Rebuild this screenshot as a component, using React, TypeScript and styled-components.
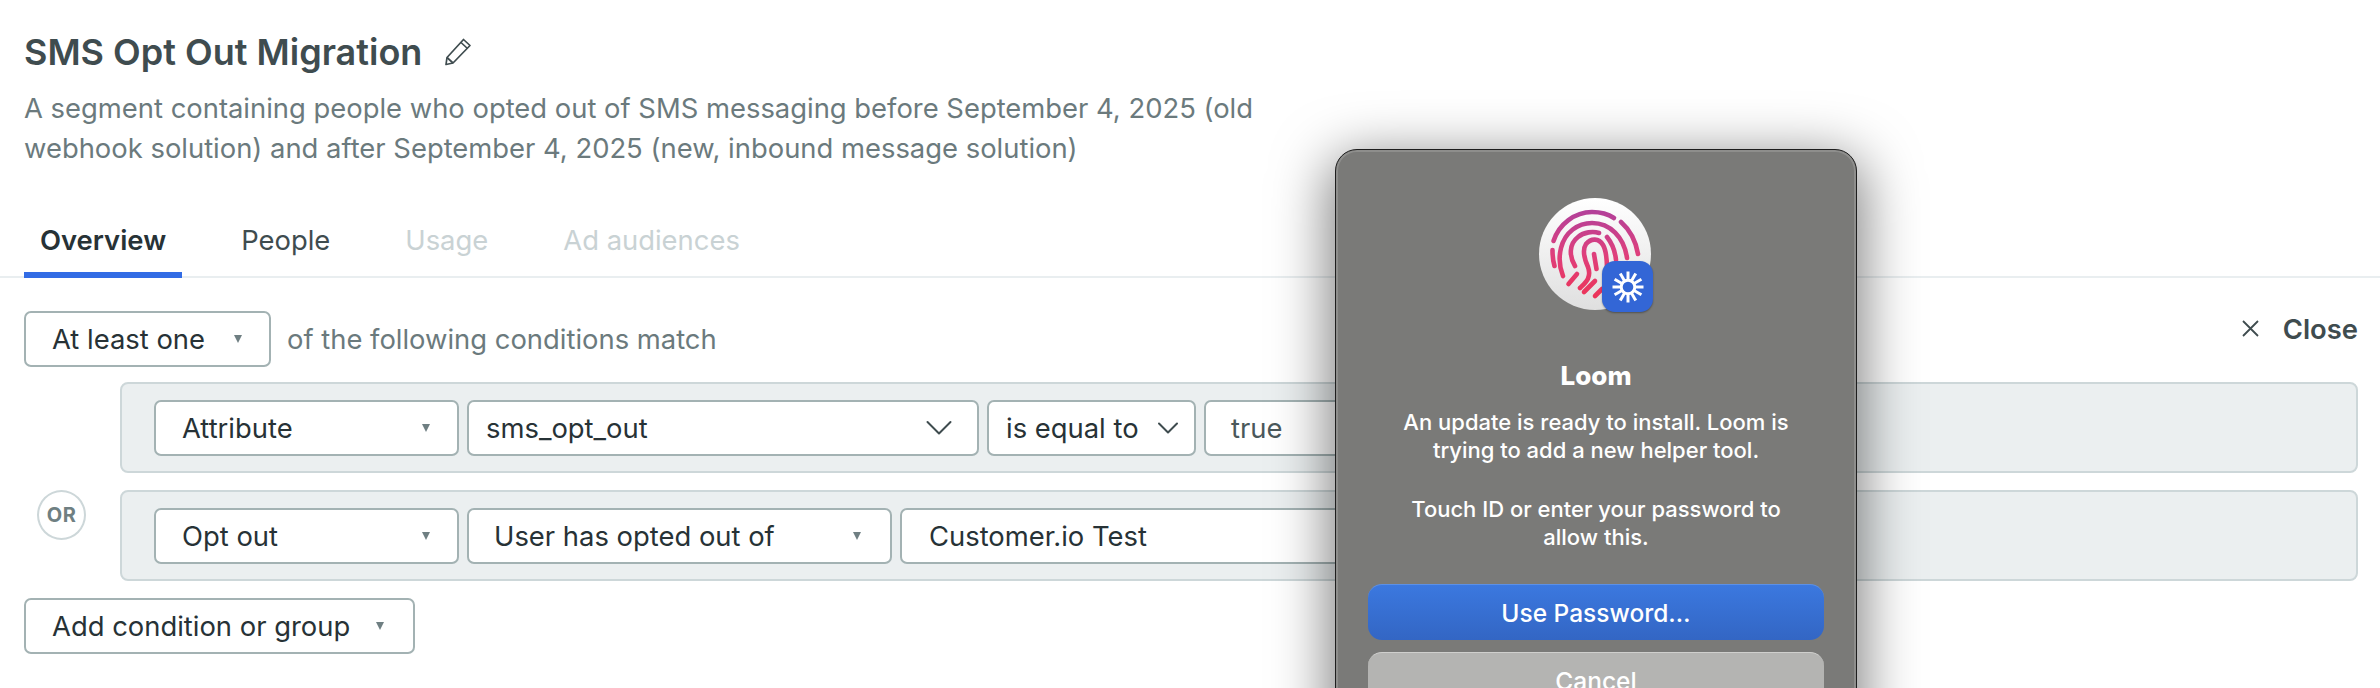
import React from "react";
import styled, { createGlobalStyle } from "styled-components";

const Global = createGlobalStyle`
  html, body { margin: 0; padding: 0; background: #fff; }
  body { width: 2380px; height: 688px; overflow: hidden; font-family: Inter, "Liberation Sans", sans-serif; }
  * { box-sizing: border-box; }
`;

const Page = styled.div`
  position: relative;
  width: 2380px;
  height: 688px;
  overflow: hidden;
  background: #fff;
`;
const Header = styled.header`
  padding: 30px 24px 0;
`;
const TitleRow = styled.div`
  display: flex;
  align-items: center;
  gap: 22px;
  height: 44px;
`;
const Title = styled.h1`
  margin: 0;
  font-size: 36px;
  line-height: 44px;
  font-weight: 600;
  color: #3f4c4f;
`;
const Description = styled.p`
  margin: 14px 0 0;
  width: 1260px;
  font-size: 27.4px;
  line-height: 40px;
  color: #6b7a7d;
`;
const Tabs = styled.nav`
  display: flex;
  height: 67px;
  margin-top: 43px;
  padding-left: 24px;
  border-bottom: 2px solid #e9eef0;
`;
const Tab = styled.div<{ $active?: boolean; $disabled?: boolean }>`
  height: 67px;
  padding: 0 16px;
  margin-right: 43px;
  font-size: 27.4px;
  line-height: 58px;
  font-weight: ${(p) => (p.$active ? 600 : 400)};
  color: ${(p) => (p.$disabled ? "#c9d2d4" : p.$active ? "#273236" : "#3f4c4f")};
  border-bottom: ${(p) => (p.$active ? "6px solid #326ce5" : "none")};
`;
const Content = styled.main`
  padding: 33px 22px 0 24px;
`;
const MatchRow = styled.div`
  display: flex;
  align-items: center;
  gap: 16px;
  height: 55px;
`;
const MatchText = styled.span`
  font-size: 27.4px;
  color: #6b7a7d;
`;
const CloseAction = styled.div`
  margin-left: auto;
  margin-top: -20px;
  margin-right: 0;
  display: flex;
  align-items: center;
  gap: 24px;
  font-size: 27.4px;
  font-weight: 600;
  color: #3f4c4f;
`;
const Conditions = styled.div`
  display: grid;
  grid-template-columns: 96px 1fr;
  row-gap: 17px;
  margin-top: 16px;
`;
const OrBadge = styled.div`
  grid-column: 1;
  margin-left: 13px;
  width: 49px;
  height: 50px;
  border: 2px solid #cdd7d9;
  border-radius: 50%;
  display: flex;
  align-items: center;
  justify-content: center;
  font-size: 20px;
  font-weight: 700;
  letter-spacing: 0.5px;
  color: #6f7f82;
`;
const Group = styled.section`
  grid-column: 2;
  height: 91px;
  display: flex;
  align-items: center;
  gap: 8px;
  padding: 0 32px;
  background: #ebeff0;
  border: 2px solid #cdd7d9;
  border-radius: 8px;
`;
const Control = styled.div<{ $w: number; $pad?: number; $muted?: boolean }>`
  flex: none;
  position: relative;
  width: ${(p) => p.$w}px;
  height: 56px;
  display: flex;
  align-items: center;
  padding-left: ${(p) => p.$pad ?? 26}px;
  background: #fff;
  border: 2px solid #a3b2b3;
  border-radius: 7px;
  font-size: 27.4px;
  color: ${(p) => (p.$muted ? "#4b585b" : "#273236")};
`;
const Caret = styled.span<{ $right: number }>`
  position: absolute;
  right: ${(p) => p.$right}px;
  top: 50%;
  margin-top: -4px;
  width: 0;
  height: 0;
  border-left: 4px solid transparent;
  border-right: 4px solid transparent;
  border-top: 8px solid #6f7f82;
`;
const Chevron = styled.svg<{ $right: number }>`
  position: absolute;
  right: ${(p) => p.$right}px;
  top: 50%;
  transform: translateY(-50%);
  fill: none;
  stroke: #3f4c4f;
  stroke-width: 2;
  stroke-linecap: round;
  stroke-linejoin: round;
`;
const AddRow = styled.div`
  margin-top: 17px;
`;

const Dialog = styled.aside`
  position: absolute;
  left: 1335px;
  top: 149px;
  width: 522px;
  height: 640px;
  padding: 48px 31px 0;
  display: flex;
  flex-direction: column;
  align-items: center;
  background: #7a7a78;
  border: 1px solid #1e1e1e;
  border-radius: 22px;
  box-shadow: inset 0 0 0 2px #8e8e8c, 0 14px 55px 6px rgba(0, 0, 0, 0.5);
  color: #fff;
`;
const IconWrap = styled.div`
  position: relative;
  width: 114px;
  height: 114px;
  flex: none;
`;
const Badge = styled.div`
  position: absolute;
  right: 0;
  bottom: 0;
  width: 51px;
  height: 51px;
  border-radius: 13px;
  background: #3366d6;
  box-shadow: 0 1px 2px rgba(0, 0, 0, 0.35);
  display: flex;
  align-items: center;
  justify-content: center;
`;
const DialogTitle = styled.h2`
  margin: 47px 0 0;
  font-size: 26px;
  line-height: 34px;
  font-weight: 800;
`;
const DialogText = styled.p<{ $gap: number }>`
  margin: ${(p) => p.$gap}px 0 0;
  text-align: center;
  font-size: 22px;
  line-height: 28px;
  font-weight: 500;
  width: 410px;
`;
const DialogButton = styled.div<{ $primary?: boolean }>`
  flex: none;
  width: 456px;
  height: 56px;
  border-radius: 14px;
  display: flex;
  align-items: center;
  justify-content: center;
  font-size: 24.5px;
  font-weight: 500;
  background: ${(p) => (p.$primary ? "linear-gradient(#3b78df, #3366c4)" : "#b4b4b2")};
  border-top: 1px solid ${(p) => (p.$primary ? "#5c90e6" : "#cfcfcd")};
  margin-top: ${(p) => (p.$primary ? 33 : 12)}px;
`;

const rays = Array.from({ length: 12 }, (_, i) => i * 30);

const Fingerprint = () => (
  <svg width="114" height="114" viewBox="0 0 114 114">
    <defs>
      <linearGradient id="disc" x1="0" y1="0" x2="0" y2="1">
        <stop offset="0" stopColor="#ffffff" />
        <stop offset="1" stopColor="#dfdfdf" />
      </linearGradient>
      <linearGradient id="ridge" gradientUnits="userSpaceOnUse" x1="0" y1="12" x2="0" y2="100">
        <stop offset="0" stopColor="#b2409a" />
        <stop offset="0.5" stopColor="#de3f7c" />
        <stop offset="1" stopColor="#ec3458" />
      </linearGradient>
    </defs>
    <ellipse cx="56" cy="56" rx="56" ry="56" fill="url(#disc)" />
    <g fill="none" stroke="url(#ridge)" strokeWidth="4.6" strokeLinecap="round">
      <path d="M14.5 43C20 26 36 14 53 14C61 14 69 16 75 20" />
      <path d="M82 24C91 32 97 44 99 56" />
      <path d="M13.5 52C13.5 58 14 63 15.5 68" />
      <path d="M24 78C20 68 20 58 22 50C26 34 39 25 53 25C71 25 85 39 88 60" />
      <path d="M36 68C30 58 30 46 39 39C45 34 54 33 60 35" />
      <path d="M68 39C72 44 76 52 77 62" />
      <path d="M41 90C46 85 53 80 49 69C45 60 43 52 47 46C52 40 60 40 64 47C67 52 68 60 68 72" />
      <path d="M55 56L57.5 71" />
      <path d="M29.5 86L38 76" />
      <path d="M45 94L56 83" />
      <path d="M56 98L63 91" />
    </g>
  </svg>
);

const LoomMark = () => (
  <svg width="32" height="32" viewBox="0 0 32 32">
    <g stroke="#fff" strokeWidth="3" strokeLinecap="butt">
      {rays.map((a) => (
        <line key={a} x1="16" y1="0.5" x2="16" y2="10" transform={`rotate(${a} 16 16)`} />
      ))}
    </g>
    <circle cx="16" cy="16" r="6.8" fill="none" stroke="#fff" strokeWidth="3" />
  </svg>
);

const Pencil = () => (
  <svg width="28" height="28" viewBox="0 0 28 28" fill="none" stroke="#3f4c4f" strokeWidth="1.7" strokeLinejoin="round">
    <path d="M2 26.5L3 19.5L19.5 1.5L26 7.5L9 25Z" />
    <path d="M17 4.5L23.5 10.5M3 19.5L9 25" />
  </svg>
);

const CloseIcon = () => (
  <svg width="17" height="17" viewBox="0 0 17 17" fill="none" stroke="#3f4c4f" strokeWidth="1.8">
    <path d="M1 1L16 16M16 1L1 16" />
  </svg>
);

export default function App() {
  return (
    <Page>
      <Global />
      <Header>
        <TitleRow>
          <Title>SMS Opt Out Migration</Title>
          <Pencil />
        </TitleRow>
        <Description>
          A segment containing people who opted out of SMS messaging before September 4, 2025 (old webhook solution) and after September 4, 2025 (new, inbound message solution)
        </Description>
      </Header>
      <Tabs>
        <Tab $active>Overview</Tab>
        <Tab>People</Tab>
        <Tab $disabled>Usage</Tab>
        <Tab $disabled>Ad audiences</Tab>
      </Tabs>
      <Content>
        <MatchRow>
          <Control $w={247}>
            At least one
            <Caret $right={27} />
          </Control>
          <MatchText>of the following conditions match</MatchText>
          <CloseAction>
            <CloseIcon />
            Close
          </CloseAction>
        </MatchRow>
        <Conditions>
          <Group>
            <Control $w={305}>
              Attribute
              <Caret $right={27} />
            </Control>
            <Control $w={512} $pad={17}>
              sms_opt_out
              <Chevron $right={25} width="26" height="15" viewBox="0 0 26 15">
                <path d="M1.5 1.5L13 13L24.5 1.5" />
              </Chevron>
            </Control>
            <Control $w={209} $pad={17}>
              is equal to
              <Chevron $right={16} width="20" height="12" viewBox="0 0 20 12">
                <path d="M1 1.5L10 10.5L19 1.5" />
              </Chevron>
            </Control>
            <Control $w={300} $pad={25} $muted>
              true
            </Control>
          </Group>
          <OrBadge>OR</OrBadge>
          <Group>
            <Control $w={305}>
              Opt out
              <Caret $right={27} />
            </Control>
            <Control $w={425} $pad={25}>
              User has opted out of
              <Caret $right={29} />
            </Control>
            <Control $w={600} $pad={27}>Customer.io Test</Control>
          </Group>
        </Conditions>
        <AddRow>
          <Control $w={391}>
            Add condition or group
            <Caret $right={29} />
          </Control>
        </AddRow>
      </Content>
      <Dialog>
        <IconWrap>
          <Fingerprint />
          <Badge>
            <LoomMark />
          </Badge>
        </IconWrap>
        <DialogTitle>Loom</DialogTitle>
        <DialogText $gap={15}>An update is ready to install. Loom is trying to add a new helper tool.</DialogText>
        <DialogText $gap={31}>Touch ID or enter your password to allow this.</DialogText>
        <DialogButton $primary>Use Password…</DialogButton>
        <DialogButton>Cancel</DialogButton>
      </Dialog>
    </Page>
  );
}
